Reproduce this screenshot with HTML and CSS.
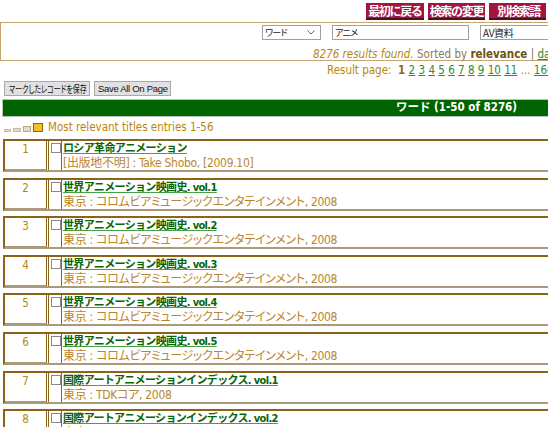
FILE: index.html
```html
<!DOCTYPE html>
<html lang="ja">
<head>
<meta charset="utf-8">
<title>検索結果</title>
<link rel="stylesheet" href="styles.css">
</head>
<body>
<div class="top">
  <span class="nb">最初に戻る</span><span class="nb">検索の変更</span><span class="nb">別検索語</span>
</div>
<div class="page">
  <div class="searchbox">
    <div class="formrow">
      <span class="sel">ワード<svg class="chev" width="8" height="5" viewBox="0 0 8 5"><path d="M0.5 0.5 L4 4 L7.5 0.5" fill="none" stroke="#666" stroke-width="1"/></svg></span>
      <span class="inp q">アニメ</span>
      <span class="inp av">AV資料</span>
    </div>
    <div class="summary"><i>8276 results found.</i> Sorted by <b>relevance</b> | <a href="#">date</a> | <a href="#">title</a></div>
  </div>
  <div class="pager">Result page:&nbsp; <b>1</b> <a href="#">2</a> <a href="#">3</a> <a href="#">4</a> <a href="#">5</a> <a href="#">6</a> <a href="#">7</a> <a href="#">8</a> <a href="#">9</a> <a href="#">10</a> <a href="#">11</a> ... <a href="#">166</a></div>
  <div class="actions"><button class="btn jp"><span class="sq">マークしたレコードを保存</span></button><button class="btn en">Save All On Page</button></div>
  <div class="bar"><span>ワード (1-50 of 8276)</span></div>
  <div class="section">
    <svg class="rank" width="40" height="9" viewBox="0 0 40 9"><rect x="0.5" y="6.5" width="6" height="2" fill="#e0d8c8" stroke="#c8bca8"/><rect x="9.5" y="5.5" width="7" height="3" fill="#e0d8c8" stroke="#c8bca8"/><rect x="19.5" y="3.5" width="7" height="5" fill="#e4dccc" stroke="#b8a888"/><rect x="29.5" y="0.5" width="9" height="8" fill="#f0c020" stroke="#8b6914"/></svg>
    <span>Most relevant titles entries 1-56</span>
  </div>

  <div class="rec"><div class="num">1</div><div class="chk"><span class="box"></span></div><div class="body"><a class="ttl" href="#">ロシア革命アニメーション</a><div class="pub">[出版地不明] : Take Shobo, [2009.10]</div></div></div>
  <div class="rec"><div class="num">2</div><div class="chk"><span class="box"></span></div><div class="body"><a class="ttl" href="#">世界アニメーション映画史. vol.1</a><div class="pub">東京 : コロムビアミュージックエンタテインメント, 2008</div></div></div>
  <div class="rec"><div class="num">3</div><div class="chk"><span class="box"></span></div><div class="body"><a class="ttl" href="#">世界アニメーション映画史. vol.2</a><div class="pub">東京 : コロムビアミュージックエンタテインメント, 2008</div></div></div>
  <div class="rec"><div class="num">4</div><div class="chk"><span class="box"></span></div><div class="body"><a class="ttl" href="#">世界アニメーション映画史. vol.3</a><div class="pub">東京 : コロムビアミュージックエンタテインメント, 2008</div></div></div>
  <div class="rec"><div class="num">5</div><div class="chk"><span class="box"></span></div><div class="body"><a class="ttl" href="#">世界アニメーション映画史. vol.4</a><div class="pub">東京 : コロムビアミュージックエンタテインメント, 2008</div></div></div>
  <div class="rec"><div class="num">6</div><div class="chk"><span class="box"></span></div><div class="body"><a class="ttl" href="#">世界アニメーション映画史. vol.5</a><div class="pub">東京 : コロムビアミュージックエンタテインメント, 2008</div></div></div>
  <div class="rec"><div class="num">7</div><div class="chk"><span class="box"></span></div><div class="body"><a class="ttl" href="#">国際アートアニメーションインデックス. vol.1</a><div class="pub">東京 : TDKコア, 2008</div></div></div>
  <div class="rec"><div class="num">8</div><div class="chk"><span class="box"></span></div><div class="body"><a class="ttl" href="#">国際アートアニメーションインデックス. vol.2</a><div class="pub">東京 : TDKコア, 2008</div></div></div>
</div>
</body>
</html>
```
FILE: styles.css
```css
* { box-sizing: border-box; }
html, body {
  margin: 0;
  padding: 0;
  overflow: hidden;
  background: #fff;
}
body {
  width: 548px;
  font-family: "DejaVu Sans Condensed", "DejaVu Sans", "Noto Sans CJK JP", sans-serif;
  font-size: 11px;
  color: #b8860b;
}
.top {
  display: flex;
  justify-content: flex-end;
  gap: 4px;
  padding: 3px 2px 0 0;
  height: 22px;
}
.nb {
  display: block;
  height: 17px;
  line-height: 15px;
  padding: 0 2px;
  background: #a3143f;
  border-bottom: 2px solid #4a1020;
  color: #fff;
  font-family: "Noto Sans CJK JP", sans-serif;
  font-weight: bold;
  font-size: 12px;
  letter-spacing: -1.3px;
  white-space: nowrap;
}
.nb:last-child { padding: 0 6px 0 8px; }
.page {
  width: 680px;
}
.searchbox {
  border-top: 1.5px solid #c8a46e;
  border-left: 1.5px solid #c8a46e;
  border-bottom: 1.5px solid #c8a46e;
  height: 39px;
}
.formrow {
  display: flex;
  align-items: center;
  padding: 1.5px 0 0 261px;
  height: 17px;
}
.sel, .inp {
  display: flex;
  align-items: center;
  height: 15px;
  border: 1px solid #a0a0a0;
  background: #fff;
  color: #222;
  font-family: "Noto Sans CJK JP", sans-serif;
  font-feature-settings: "palt";
  font-size: 9px;
  letter-spacing: -0.6px;
  padding-left: 2px;
  white-space: nowrap;
}
.sel { width: 59px; justify-content: space-between; padding-right: 5px; }
.q { width: 137px; margin-left: 11px; }
.av { width: 150px; margin-left: 11px; font-size: 10px; letter-spacing: -0.3px; }
.summary {
  padding: 8px 0 0 312px;
  white-space: nowrap;
  font-size: 11.5px;
  line-height: 13px;
  color: #8b7a50;
}
.summary i { color: #b8860b; }
.summary b { color: #6b5418; }
.summary a, .pager a { color: #2e8b2e; }
.pager {
  padding: 2px 0 0 327px;
  height: 17px;
  white-space: nowrap;
  font-size: 11.5px;
  color: #b8860b;
}
.pager b { color: #8b6914; }
.actions {
  display: flex;
  gap: 4px;
  padding: 3px 0 0 4px;
  height: 21px;
}
.btn {
  height: 15px;
  margin: 0;
  padding: 0 3px;
  background: #e1e1e1;
  border: 1px solid #a8a8a8;
  color: #111;
  white-space: nowrap;
  line-height: 12px;
}
.btn.jp {
  width: 86px;
  padding: 0 0 0 4px;
  text-align: left;
  font-family: "Noto Sans CJK JP", sans-serif;
  font-feature-settings: "palt";
  font-size: 10px;
}
.sq {
  display: inline-block;
  transform: scaleX(0.7);
  transform-origin: left center;
}
.btn.en {
  width: 77px;
  font-family: "Liberation Sans", sans-serif;
  font-size: 9.5px;
  letter-spacing: -0.3px;
}
.bar {
  margin-left: 2px;
  height: 18px;
  background: #006400;
  border: 1px solid #b8c8b8;
  color: #fff;
  font-weight: bold;
  font-size: 11.5px;
  line-height: 15px;
  padding-left: 393px;
  white-space: nowrap;
}
.section {
  display: flex;
  align-items: center;
  gap: 4px;
  padding: 0 0 2px 4px;
  height: 22px;
  font-size: 11.5px;
  color: #b8860b;
  white-space: nowrap;
}
.rank { margin-top: 1px; }
.rec {
  display: flex;
  margin: 0 0 5.6px 3px;
  height: 33px;
  border-top: 2px solid #8b6418;
  border-left: 2px solid #8b6418;
  border-bottom: 2px solid #a99a7c;
}
.num {
  width: 42px;
  border-right: 1px solid #8b6418;
  border-bottom: 1px solid #a99a7c;
  text-align: center;
  font-size: 11.5px;
  color: #b8860b;
  line-height: 15px;
  padding-top: 1px;
}
.chk {
  width: 13px;
  margin-left: 1px;
  border-left: 1px solid #8b6418;
  padding: 2px 0 0 2px;
}
.box {
  display: block;
  width: 10px;
  height: 10px;
  border: 1px solid #888;
  background: #fff;
}
.body {
  border-left: 1px solid #8b6418;
  padding-left: 1px;
  flex: 1;
  white-space: nowrap;
}
.ttl {
  display: block;
  font-family: "DejaVu Sans Condensed", "DejaVu Sans", "Noto Sans CJK JP", sans-serif;
  font-weight: bold;
  font-size: 11px;
  letter-spacing: -0.65px;
  line-height: 15px;
  color: #0a640a;
  text-decoration: underline;
  text-decoration-color: #46a046;
  text-underline-offset: 1px;
}
.pub {
  font-size: 12px;
  font-feature-settings: "palt";
  letter-spacing: -0.3px;
  line-height: 15px;
  color: #b8862e;
}
```
